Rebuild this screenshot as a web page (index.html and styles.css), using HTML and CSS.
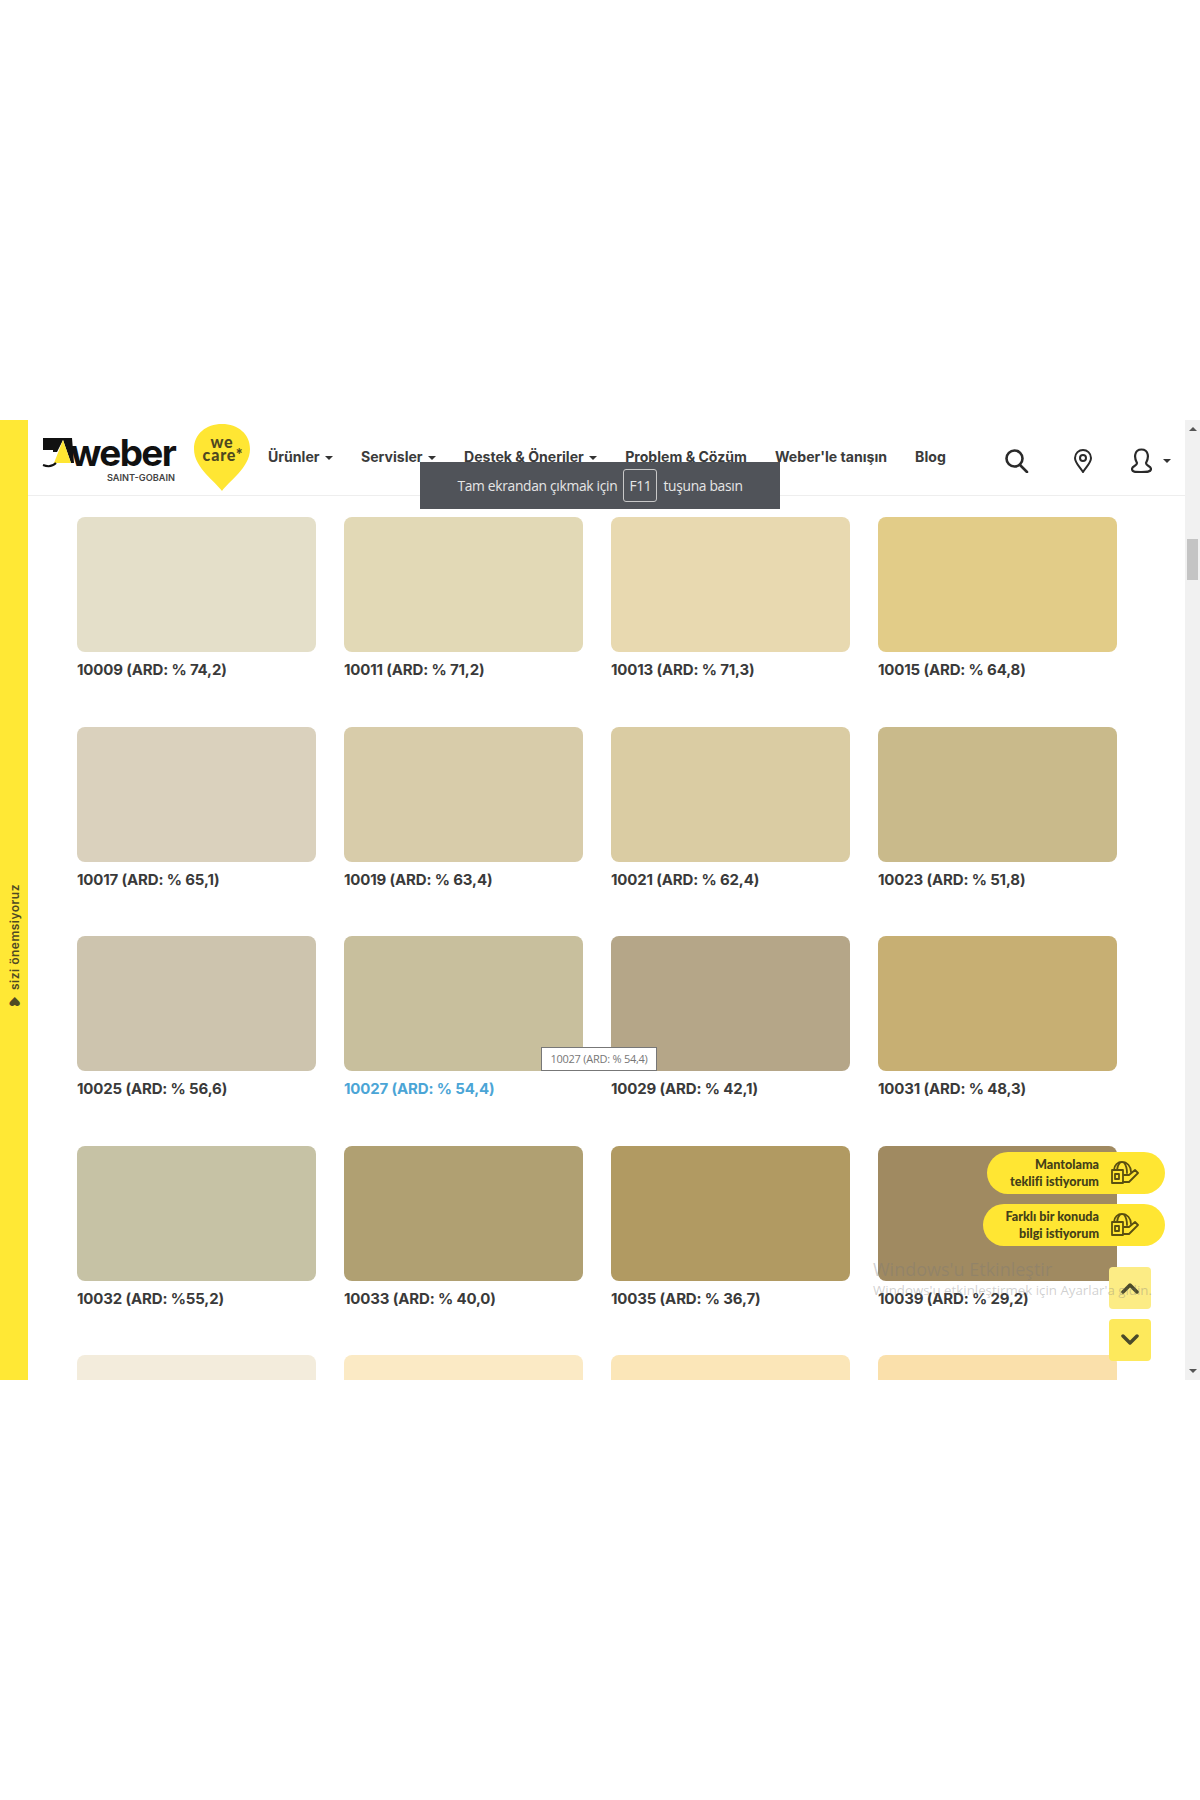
FILE: index.html
```html
<!DOCTYPE html>
<html lang="tr">
<head>
  <meta charset="UTF-8" />
  <meta name="viewport" content="width=device-width, initial-scale=1.0"/>
  <title>Weber renk kartelası</title>
  <link rel="stylesheet" href="styles.css">
</head>
<body>
  <div class="frame">
    <aside class="side"><span class="side-text">♥ sizi önemsiyoruz</span></aside>

    <div class="main">
      <header class="top">
        <a class="logo">
          <svg class="logo-mark" width="34" height="36" viewBox="0 0 34 36">
            <path d="M2 0H31L33 25H30L22 2L16 14H12V12H2Z" fill="#111"/>
            <path d="M22 2L30 25H13Z" fill="#ffe633"/>
            <path d="M2 27C7 29 12 28 15 25" fill="none" stroke="#111" stroke-width="2"/>
          </svg>
          <div class="logo-words">
            <span class="logo-name">weber</span>
            <span class="logo-sub">SAINT-GOBAIN</span>
          </div>
        </a>
        <svg class="wecare" width="56" height="67" viewBox="0 0 56 67">
          <path d="M28 67C22 58 0 44 0 25C0 10 12 0 28 0C44 0 56 10 56 25C56 44 34 58 28 67Z" fill="#ffe633"/>
          <text x="28" y="24" text-anchor="middle" class="wecare-text">we</text>
          <text x="29" y="37" text-anchor="middle" class="wecare-text">care*</text>
        </svg>
        <nav class="nav">
          <a class="nav-link">Ürünler <i class="caret"></i></a>
          <a class="nav-link">Servisler <i class="caret"></i></a>
          <a class="nav-link">Destek &amp; Öneriler <i class="caret"></i></a>
          <a class="nav-link">Problem &amp; Çözüm</a>
          <a class="nav-link">Weber'le tanışın</a>
          <a class="nav-link">Blog</a>
        </nav>
        <div class="tools">
          <svg width="24" height="24" viewBox="0 0 24 24" fill="none" stroke="#2a2a2a" stroke-width="2.600" stroke-linecap="round">
            <circle cx="9.500" cy="9.500" r="8"/>
            <path d="M15 16L22 23"/>
          </svg>
          <svg width="18" height="24" viewBox="0 0 18 24" fill="none" stroke="#2a2a2a" stroke-width="2">
            <path d="M9 23C6 18 1 14 1 9C1 4 5 1 9 1C13 1 17 4 17 9C17 14 12 18 9 23Z"/>
            <circle cx="9" cy="9" r="3"/>
          </svg>
          <div class="user">
            <svg width="21" height="25" viewBox="0 0 21 25" fill="none" stroke="#2a2a2a" stroke-width="2.200" stroke-linecap="round">
              <path d="M6 15C3 10 3 1.500 10.500 1.500C18 1.500 18 10 15 15C15 18 20 18 20 21C20 24 16 24 10 24C4 24 1 24 1 21C1 18 6 18 6 15Z"/>
            </svg>
            <i class="caret"></i>
          </div>
        </div>
      </header>

      <section class="colors">
        <figure class="color"><div class="swatch c10009"></div><figcaption>10009 (ARD: % 74,2)</figcaption></figure>
        <figure class="color"><div class="swatch c10011"></div><figcaption>10011 (ARD: % 71,2)</figcaption></figure>
        <figure class="color"><div class="swatch c10013"></div><figcaption>10013 (ARD: % 71,3)</figcaption></figure>
        <figure class="color"><div class="swatch c10015"></div><figcaption>10015 (ARD: % 64,8)</figcaption></figure>
        <figure class="color"><div class="swatch c10017"></div><figcaption>10017 (ARD: % 65,1)</figcaption></figure>
        <figure class="color"><div class="swatch c10019"></div><figcaption>10019 (ARD: % 63,4)</figcaption></figure>
        <figure class="color"><div class="swatch c10021"></div><figcaption>10021 (ARD: % 62,4)</figcaption></figure>
        <figure class="color"><div class="swatch c10023"></div><figcaption>10023 (ARD: % 51,8)</figcaption></figure>
        <figure class="color"><div class="swatch c10025"></div><figcaption>10025 (ARD: % 56,6)</figcaption></figure>
        <figure class="color active"><div class="swatch c10027"></div><figcaption>10027 (ARD: % 54,4)</figcaption></figure>
        <figure class="color"><div class="swatch c10029"></div><figcaption>10029 (ARD: % 42,1)</figcaption></figure>
        <figure class="color"><div class="swatch c10031"></div><figcaption>10031 (ARD: % 48,3)</figcaption></figure>
        <figure class="color"><div class="swatch c10032"></div><figcaption>10032 (ARD: %55,2)</figcaption></figure>
        <figure class="color"><div class="swatch c10033"></div><figcaption>10033 (ARD: % 40,0)</figcaption></figure>
        <figure class="color"><div class="swatch c10035"></div><figcaption>10035 (ARD: % 36,7)</figcaption></figure>
        <figure class="color"><div class="swatch c10039"></div><figcaption>10039 (ARD: % 29,2)</figcaption></figure>
        <figure class="color"><div class="swatch c10041"></div></figure>
        <figure class="color"><div class="swatch c10043"></div></figure>
        <figure class="color"><div class="swatch c10045"></div></figure>
        <figure class="color"><div class="swatch c10047"></div></figure>
      </section>
    </div>

    <div class="scrollbar">
      <i class="arrow-up"></i>
      <div class="track"><div class="thumb"></div></div>
      <i class="arrow-down"></i>
    </div>

    <div class="fs-notice">
      <span>Tam ekrandan çıkmak için</span><kbd class="key">F11</kbd><span>tuşuna basın</span>
    </div>

    <div class="tooltip">10027 (ARD: % 54,4)</div>

    <div class="floats">
      <a class="pill pill-one">
        <span>Mantolama<br>teklifi istiyorum</span>
        <svg class="pill-icon" width="30" height="24" viewBox="0 0 30 24" fill="none" stroke="#5a4f10" stroke-width="1.800" stroke-linejoin="round" stroke-linecap="round">
          <path d="M5 9C5 4 9 1 13 1C18 1 22 5 22 11"/>
          <path d="M11 1.500C9 4 8 6 8 9M15 1.500C17 4 18 7 18 12"/>
          <path d="M3 9H14V22H3Z"/>
          <path d="M6 13H10V18H6Z"/>
          <path d="M14 21H20L29 12L26 9L20 14H15"/>
        </svg>
      </a>
      <a class="pill pill-two">
        <span>Farklı bir konuda<br>bilgi istiyorum</span>
        <svg class="pill-icon" width="30" height="24" viewBox="0 0 30 24" fill="none" stroke="#5a4f10" stroke-width="1.800" stroke-linejoin="round" stroke-linecap="round">
          <path d="M5 9C5 4 9 1 13 1C18 1 22 5 22 11"/>
          <path d="M11 1.500C9 4 8 6 8 9M15 1.500C17 4 18 7 18 12"/>
          <path d="M3 9H14V22H3Z"/>
          <path d="M6 13H10V18H6Z"/>
          <path d="M14 21H20L29 12L26 9L20 14H15"/>
        </svg>
      </a>
      <a class="square faded">
        <svg width="20" height="12" viewBox="0 0 20 12" fill="none" stroke="#4a4a2a" stroke-width="3.500" stroke-linecap="round" stroke-linejoin="round"><path d="M3 10L10 3L17 10"/></svg>
      </a>
      <a class="square">
        <svg width="20" height="12" viewBox="0 0 20 12" fill="none" stroke="#4a4a2a" stroke-width="3.500" stroke-linecap="round" stroke-linejoin="round"><path d="M3 2L10 9L17 2"/></svg>
      </a>
    </div>

    <div class="watermark">
      <div class="wm-title">Windows'u Etkinleştir</div>
      <div class="wm-sub">Windows'u etkinleştirmek için Ayarlar'a gidin.</div>
    </div>
  </div>
</body>
</html>
```

FILE: styles.css
```css
* {
  box-sizing: border-box;
}
body {
  margin: 0;
  background: #fff;
  color: #333;
  font-family: Inter, 'Liberation Sans', sans-serif;
  padding-top: 420px;
  height: 1800px;
  overflow: hidden;
}
.frame {
  position: relative;
  display: flex;
  height: 960px;
}

/* left stripe */
.side {
  width: 28px;
  flex: none;
  background: #ffe835;
  display: flex;
  align-items: center;
  justify-content: center;
  padding-top: 94px;
}
.side-text {
  writing-mode: vertical-rl;
  transform: rotate(180deg);
  font-size: 12px;
  font-weight: 600;
  letter-spacing: 0.5px;
  color: #4f4a24;
}

.main {
  flex: 1;
  min-width: 0;
  overflow: hidden;
}

/* header */
.top {
  height: 76px;
  display: flex;
  align-items: flex-start;
  border-bottom: 1px solid #eee;
  padding-left: 13px;
}
.logo {
  display: flex;
  width: 136px;
  margin-top: 16px;
}
.logo-mark {
  flex: none;
  margin-top: 2px;
  margin-right: -6px;
}
.logo-words {
  display: flex;
  flex-direction: column;
  align-items: flex-end;
  width: 106px;
}
.logo-name {
  font-size: 37px;
  font-weight: 700;
  line-height: 34px;
  letter-spacing: -1.700px;
  color: #111;
}
.logo-sub {
  font-size: 9.200px;
  font-weight: 600;
  line-height: 11px;
  color: #444;
  margin-top: 2px;
}
.wecare {
  flex: none;
  margin: 4px 0 0 17px;
}
.wecare-text {
  font-family: Lato, sans-serif;
  font-size: 16px;
  font-weight: 900;
  letter-spacing: 0.8px;
  fill: #4f4820;
}
.nav {
  display: flex;
  gap: 28px;
  margin: 28px 0 0 18px;
  width: 747px;
}
.nav-link {
  font-size: 14.100px;
  font-weight: 700;
  line-height: 18px;
  color: #3b3b3b;
  white-space: nowrap;
}
.caret {
  display: inline-block;
  width: 0;
  height: 0;
  margin-left: 2px;
  vertical-align: middle;
  border-top: 4px solid #333;
  border-left: 4px solid transparent;
  border-right: 4px solid transparent;
}
.tools {
  display: flex;
  align-items: center;
  gap: 45px;
  margin-top: 28px;
  margin-left: -10px;
}
.user {
  display: flex;
  align-items: center;
  gap: 9px;
  margin-left: -6px;
}

/* colour cards */
.colors {
  display: grid;
  grid-template-columns: repeat(4, 239px);
  column-gap: 28px;
  grid-auto-rows: 209.500px;
  padding: 21px 0 0 49px;
}
.color {
  margin: 0;
}
.swatch {
  height: 135px;
  border-radius: 8px;
}
.color figcaption {
  margin-top: 8px;
  font-size: 15px;
  font-weight: 700;
  line-height: 20px;
  letter-spacing: -0.15px;
  color: #3a3a3a;
  white-space: nowrap;
}
.color.active figcaption {
  color: #4ba5d6;
}

.c10009 { background: #e4dfc9; }
.c10011 { background: #e2d9b6; }
.c10013 { background: #e8d9b0; }
.c10015 { background: #e2cc88; }
.c10017 { background: #dad1bd; }
.c10019 { background: #d8ccaa; }
.c10021 { background: #dacca3; }
.c10023 { background: #c9ba8b; }
.c10025 { background: #cdc4ae; }
.c10027 { background: #c8bf9d; }
.c10029 { background: #b5a688; }
.c10031 { background: #c7af73; }
.c10032 { background: #c6c2a5; }
.c10033 { background: #b0a072; }
.c10035 { background: #b19a62; }
.c10039 { background: #a08a61; }
.c10041 { background: #f3ecdc; }
.c10043 { background: #fbeac5; }
.c10045 { background: #fbe6b8; }
.c10047 { background: #fae0ab; }

/* scrollbar */
.scrollbar {
  width: 15px;
  flex: none;
  background: #f1f1f1;
  display: flex;
  flex-direction: column;
  align-items: center;
  padding: 7px 0;
}
.track {
  flex: 1;
  width: 100%;
  padding: 108px 2px 0;
}
.thumb {
  height: 41px;
  background: #c4c4c4;
}
.arrow-up, .arrow-down {
  width: 0;
  height: 0;
  border-left: 4px solid transparent;
  border-right: 4px solid transparent;
}
.arrow-up {
  border-bottom: 4px solid #555;
}
.arrow-down {
  border-top: 4px solid #555;
}

/* things on top of the page */
.fs-notice {
  position: absolute;
  left: 420px;
  top: 42px;
  width: 360px;
  height: 47px;
  background: #505359;
  color: #e6e6e6;
  font-family: 'Open Sans', sans-serif;
  font-size: 13.800px;
  letter-spacing: -0.3px;
  display: flex;
  align-items: center;
  justify-content: center;
  gap: 6px;
}
.key {
  font-family: 'Open Sans', sans-serif;
  border: 1px solid #c8c8c8;
  border-radius: 3px;
  padding: 0 5px;
  line-height: 31px;
  height: 33px;
}
.tooltip {
  position: absolute;
  left: 541px;
  top: 627px;
  width: 116px;
  height: 24px;
  background: #fff;
  border: 1px solid #777;
  color: #777;
  font-family: 'Open Sans', sans-serif;
  font-size: 11px;
  letter-spacing: -0.25px;
  line-height: 22px;
  text-align: center;
}
.watermark {
  position: absolute;
  left: 873px;
  top: 837px;
  color: rgba(120, 120, 120, 0.35);
  font-family: 'Open Sans', sans-serif;
  white-space: nowrap;
}
.wm-title {
  font-size: 18px;
  line-height: 24px;
}
.wm-sub {
  font-size: 13.300px;
  line-height: 18px;
}
.floats {
  position: absolute;
  right: 35px;
  top: 732px;
  display: flex;
  flex-direction: column;
  align-items: flex-end;
  gap: 10px;
}
.pill {
  display: flex;
  align-items: center;
  justify-content: flex-end;
  gap: 10px;
  height: 42px;
  padding-right: 26px;
  border-radius: 21px;
  background: #ffe633;
  color: #444018;
  font-family: Lato, sans-serif;
  font-size: 12.600px;
  font-weight: 900;
  line-height: 17px;
  text-align: right;
}
.pill-one {
  width: 178px;
}
.pill-two {
  width: 182px;
}
.square {
  display: flex;
  align-items: center;
  justify-content: center;
  width: 42px;
  height: 42px;
  margin-right: 14px;
  border-radius: 4px;
  background: #fde95c;
}
.faded {
  background: #fcec85;
  margin-top: 11px;
}
```
